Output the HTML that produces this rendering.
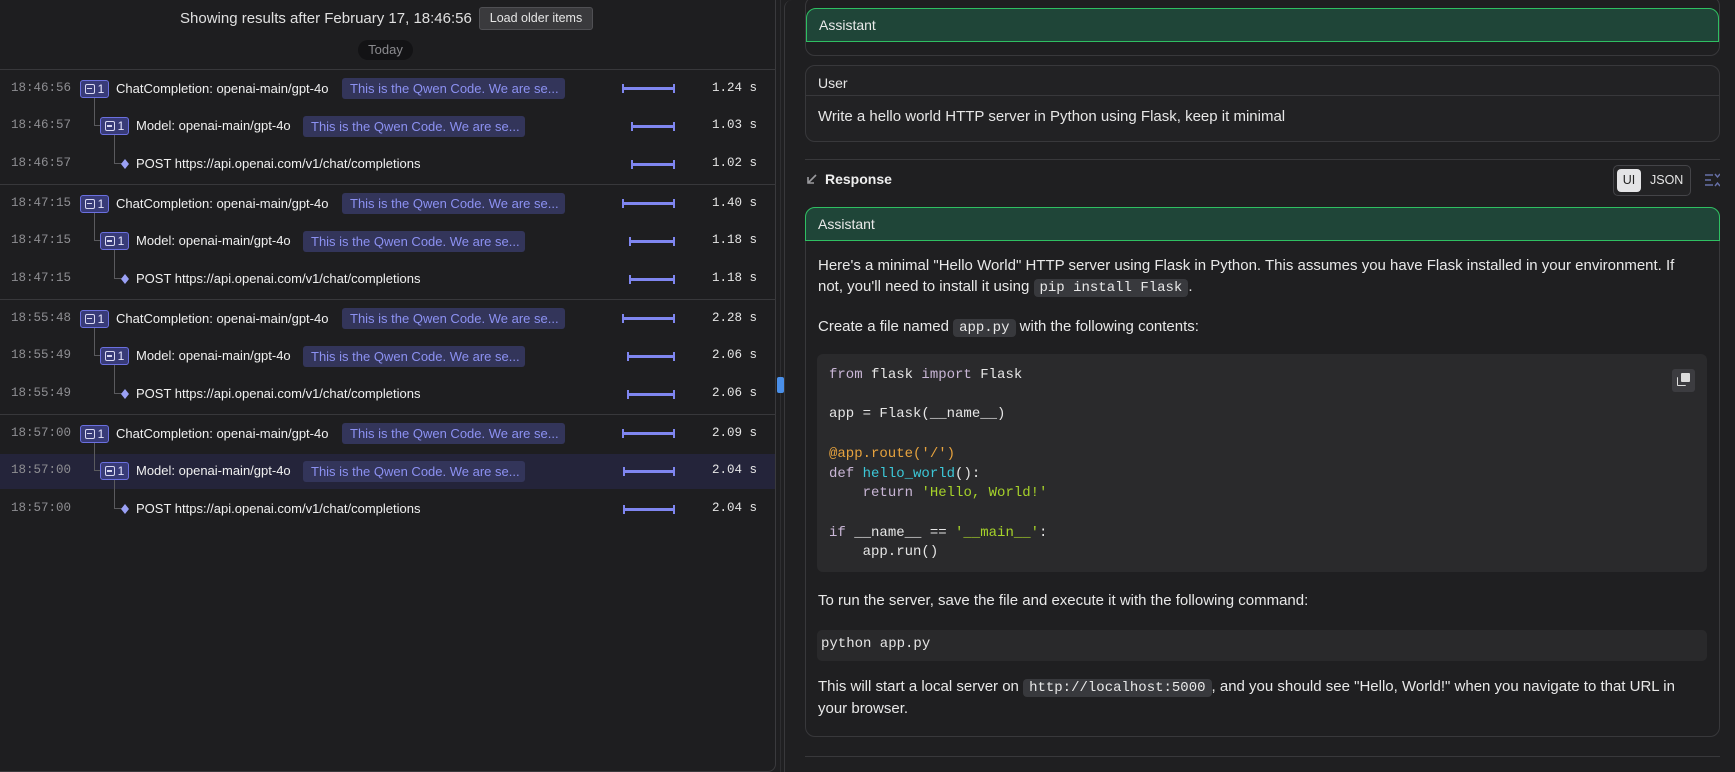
<!DOCTYPE html>
<html><head><meta charset="utf-8"><style>
*{box-sizing:border-box;margin:0;padding:0}
body{width:1735px;height:772px;background:#1f1f21;overflow:hidden;position:relative;font-family:"Liberation Sans",sans-serif;color:#e6e6e6}
.a{position:absolute}
.mono{font-family:"Liberation Mono",monospace}
.left{left:0;top:0;width:776px;height:772px;border-right:1px solid #3a3a3d;border-bottom:1px solid #3a3a3d;border-bottom-right-radius:8px;background:#1e1e20}
.time{font-family:"Liberation Mono",monospace;font-size:12.5px;color:#8e8e92;left:11px}
.badge{height:18px;width:29px;border:1px solid #6b70e0;background:#383b78;border-radius:3px;font-size:12px;color:#e8e8ff;display:flex;align-items:center;justify-content:center;gap:3px}
.badge i{display:inline-block;width:10px;height:10px;border:1.5px solid #d8d8f0;border-radius:2px;position:relative}
.badge i:after{content:"";position:absolute;left:1.5px;right:1.5px;top:3px;height:1.5px;background:#d8d8f0}
.lbl{font-size:13px;color:#f0f0f0;white-space:nowrap}
.chip{height:21px;background:#33355a;color:#8c91f2;font-size:13px;border-radius:3px;padding:0 8px;line-height:21px;white-space:nowrap}
.bar{height:3px;background:#7f86f0}
.bar:before,.bar:after{content:"";position:absolute;top:-3px;width:2px;height:9px;background:#7f86f0}
.bar:before{left:0}.bar:after{right:0}
.dur{font-family:"Liberation Mono",monospace;font-size:12.5px;color:#e6e6e6;left:712px}
.sep{left:0;width:776px;height:1px;background:#38383b}
.tree{border-left:1px solid #5a5a5e;border-bottom:1px solid #5a5a5e}
.card{border:1px solid #38383b;border-radius:10px;left:805px;width:915px}
.gh{background:#1f4538;border:1px solid #2fbf62;border-radius:10px 10px 0 0;height:34px;font-size:14px;padding-left:12px;line-height:32px;color:#eaeaea}
.p{font-size:15px;color:#e8e8e8;left:818px;white-space:nowrap}
.ic{font-family:"Liberation Mono",monospace;background:#38393d;border-radius:4px;padding:1px 6px;font-size:14px}
.code{font-family:"Liberation Mono",monospace;font-size:14px;color:#e6e6e6;white-space:pre;line-height:19.7px}
.k{color:#c9b6d6}.d{color:#e7a33e}.f{color:#3cc8d8}.s{color:#a6d22a}
</style></head><body>
<div class="a left"></div>
<div class="a" style="left:180px;top:10px;font-size:15px;color:#e0e0e0">Showing results after February 17, 18:46:56</div>
<div class="a" style="left:479px;top:7px;width:114px;height:23px;background:#3a3a3d;border:1px solid #505054;border-radius:3px;font-size:12.5px;color:#e6e6e6;text-align:center;line-height:21px">Load older items</div>
<div class="a" style="left:358px;top:40px;width:55px;height:20px;background:#131315;border-radius:10px;font-size:13px;color:#8a8a8e;text-align:center;line-height:20px">Today</div>
<div class="a sep" style="top:69px"></div>
<div class="a sep" style="top:184px"></div>
<div class="a sep" style="top:299px"></div>
<div class="a sep" style="top:414px"></div>
<div class="a" style="left:0;top:454px;width:775px;height:35px;background:#24243a"></div>

<div id="rows"></div>
<script>
var d=[["18:46:56","18:46:57","18:46:57","1.24","1.03","1.02",622,631,631],
["18:47:15","18:47:15","18:47:15","1.40","1.18","1.18",622,629,629],
["18:55:48","18:55:49","18:55:49","2.28","2.06","2.06",622,627,627],
["18:57:00","18:57:00","18:57:00","2.09","2.04","2.04",622,623,623]];
var h="";
d.forEach(function(g,i){
var c=[88.5+115*i,126+115*i,164+115*i];
h+='<div class="a time" style="top:'+(c[0]-8)+'px">'+g[0]+'</div>';
h+='<div class="a time" style="top:'+(c[1]-8)+'px">'+g[1]+'</div>';
h+='<div class="a time" style="top:'+(c[2]-8)+'px">'+g[2]+'</div>';
h+='<div class="a tree" style="left:94px;top:'+(c[0]+9)+'px;width:7px;height:'+(c[1]-c[0]-9)+'px"></div>';
h+='<div class="a tree" style="left:114px;top:'+(c[1]+9)+'px;width:8px;height:'+(c[2]-c[1]-9)+'px"></div>';
h+='<div class="a badge" style="left:80px;top:'+(c[0]-9)+'px"><i></i>1</div>';
h+='<div class="a lbl" style="left:116px;top:'+(c[0]-8)+'px">ChatCompletion: openai-main/gpt-4o</div>';
h+='<div class="a chip" style="left:342px;top:'+(c[0]-10.5)+'px;width:223px">This is the Qwen Code. We are se...</div>';
h+='<div class="a badge" style="left:100px;top:'+(c[1]-9)+'px"><i></i>1</div>';
h+='<div class="a lbl" style="left:136px;top:'+(c[1]-8)+'px">Model: openai-main/gpt-4o</div>';
h+='<div class="a chip" style="left:303px;top:'+(c[1]-10.5)+'px;width:222px">This is the Qwen Code. We are se...</div>';
h+='<div class="a" style="left:121px;top:'+(c[2]-5)+'px;width:8px;height:10px;background:#9aa0f5;clip-path:polygon(50% 0,100% 50%,50% 100%,0 50%)"></div>';
h+='<div class="a lbl" style="left:136px;top:'+(c[2]-8)+'px">POST https://api.openai.com/v1/chat/completions</div>';
for(var j=0;j<3;j++){h+='<div class="a bar" style="left:'+g[6+j]+'px;width:'+(675-g[6+j])+'px;top:'+(c[j]-1.5)+'px"></div>';
h+='<div class="a dur" style="top:'+(c[j]-8)+'px">'+g[3+j]+' s</div>';}
});
document.getElementById("rows").innerHTML=h;
</script>

<div class="a" style="left:780px;top:0;width:1px;height:772px;background:#2e2e31"></div>
<div class="a" style="left:777px;top:377px;width:7px;height:16px;background:#4a8fe8;border-radius:2px"></div>
<div class="a" style="left:784px;top:0;width:951px;height:772px;border-left:1px solid #38383b;border-top-left-radius:8px"></div>

<div class="a card" style="top:-4px;height:60px"><div class="gh" style="margin-top:11px;height:34px">Assistant</div></div>
<div class="a card" style="top:65px;height:77px;background:#222224">
<div style="height:30px;border-bottom:1px solid #38383b;font-size:14px;padding-left:12px;line-height:34px">User</div>
<div style="font-size:15px;padding:12px 0 0 12px">Write a hello world HTTP server in Python using Flask, keep it minimal</div></div>
<div class="a" style="left:805px;top:159px;width:915px;height:1px;background:#38383b"></div>
<svg class="a" style="left:806px;top:173px" width="12" height="12" viewBox="0 0 12 12"><path d="M10 2 L2 10 M2 4 V10 H8" stroke="#9a9a9e" stroke-width="1.6" fill="none"/></svg>
<div class="a" style="left:825px;top:171px;font-size:14px;font-weight:bold;color:#eee">Response</div>
<div class="a" style="left:1613px;top:165px;width:78px;height:31px;border:1px solid #444448;border-radius:5px;background:#232325"></div>
<div class="a" style="left:1617px;top:169px;width:24px;height:23px;background:#e4e4e6;border-radius:4px;color:#222;font-size:12.5px;text-align:center;line-height:23px">UI</div>
<div class="a" style="left:1650px;top:173px;font-size:12.5px;color:#e6e6e6">JSON</div>
<svg class="a" style="left:1705px;top:173px" width="15" height="14" viewBox="0 0 15 14"><path d="M0 2H8M0 7H6M0 12H8M10 1L12.5 4L15 1M10 13L12.5 10L15 13" stroke="#6770a8" stroke-width="1.4" fill="none"/></svg>

<div class="a card" style="top:207px;height:530px">
<div class="gh" style="margin:-1px -1px 0 -1px">Assistant</div></div>
<div class="a p" style="top:257px">Here's a minimal "Hello World" HTTP server using Flask in Python. This assumes you have Flask installed in your environment. If</div>
<div class="a p" style="top:278px">not, you'll need to install it using <span class="ic">pip install Flask</span>.</div>
<div class="a p" style="top:318px">Create a file named <span class="ic">app.py</span> with the following contents:</div>
<div class="a" style="left:817px;top:354px;width:890px;height:218px;background:#2a2a2c;border-radius:6px"></div>
<div class="a" style="left:1672px;top:369px;width:23px;height:23px;background:#3c3c40;border-radius:3px"></div>
<div class="a" style="left:1681px;top:373px;width:9px;height:9px;background:#dcdcdc;border-radius:1px"></div>
<div class="a" style="left:1677px;top:377px;width:9px;height:9px;border:1.5px solid #dcdcdc;border-radius:1px;border-top:none;border-right:none"></div>
<div class="a code" style="left:829px;top:366px"><span class="k">from</span> flask <span class="k">import</span> Flask

app = Flask(__name__)

<span class="d">@app.route('/')</span>
<span class="k">def</span> <span class="f">hello_world</span>():
    <span class="k">return</span> <span class="s">'Hello, World!'</span>

<span class="k">if</span> __name__ == <span class="s">'__main__'</span>:
    app.run()</div>
<div class="a p" style="top:592px">To run the server, save the file and execute it with the following command:</div>
<div class="a" style="left:817px;top:630px;width:890px;height:31px;background:#29292b;border-radius:5px"></div>
<div class="a code" style="left:821px;top:635px">python app.py</div>
<div class="a p" style="top:678px">This will start a local server on <span class="ic">http://localhost:5000</span>, and you should see "Hello, World!" when you navigate to that URL in</div>
<div class="a p" style="top:700px">your browser.</div>
<div class="a" style="left:805px;top:756px;width:915px;height:1px;background:#38383b"></div>
</body></html>
